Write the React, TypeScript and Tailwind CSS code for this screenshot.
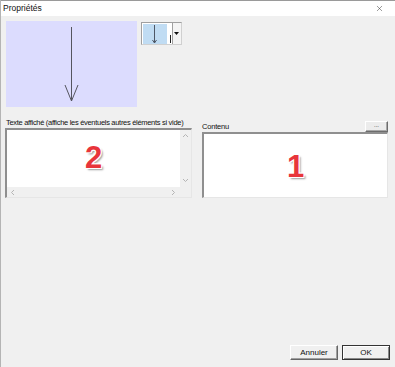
import { X } from "lucide-react";

const Chevron = ({ dir }: { dir: "up" | "down" | "left" | "right" }) => {
  const d = {
    up: "M1 4 L3.5 1.5 L6 4",
    down: "M1 2 L3.5 4.5 L6 2",
    left: "M4 1 L1.5 3.5 L4 6",
    right: "M2 1 L4.5 3.5 L2 6",
  }[dir];
  return (
    <svg width="7" height="7" viewBox="0 0 7 7" className="block">
      <path d={d} fill="none" stroke="#b5b5b5" strokeWidth="1" />
    </svg>
  );
};

const BigNumber = ({ value }: { value: string }) => (
  <span className="font-['Liberation_Sans',sans-serif] text-[31px] font-bold leading-none text-[#e8353b] [text-shadow:-1px_-1px_0_#fff,1px_-1px_0_#fff,-1px_1px_0_#fff,1px_1px_0_#fff,2px_2px_2px_#9a9a9a]">
    {value}
  </span>
);

const DialogButton = ({ label, primary }: { label: string; primary?: boolean }) => (
  <button
    className={
      primary
        ? "h-[15px] w-[48px] border border-[#333] bg-[#f0f0f0] p-0 text-[8px] leading-none text-[#111] shadow-[inset_1px_1px_0_#fff,inset_-1px_-1px_0_#888]"
        : "h-[15px] w-[48px] border border-t-[#fff] border-l-[#fff] border-r-[#666] border-b-[#666] bg-[#f0f0f0] p-0 text-[8px] leading-none text-[#111] shadow-[inset_-1px_-1px_0_#a0a0a0]"
    }
  >
    {label}
  </button>
);

export default function App() {
  return (
    <div className="flex h-[367px] w-[395px] flex-col overflow-hidden border-l border-[#b4b4b4] bg-[#f0f0f0] font-['Liberation_Sans',sans-serif] text-[#111]">
      {/* title bar */}
      <div className="flex h-[16px] shrink-0 items-center justify-between border-t border-[#9a9a9a] bg-white pl-[2px] pr-[11px]">
        <span className="text-[8.5px] leading-none">Propriétés</span>
        <X size={9} strokeWidth={1.2} color="#222" />
      </div>

      {/* preview + combo */}
      <div className="flex items-start pl-[5px] pt-[5px]">
        <div className="h-[86px] w-[131px] bg-[#dcdcfe]">
          <svg width="131" height="86" viewBox="0 0 131 86">
            <g stroke="#55555f" strokeWidth="1" fill="none">
              <line x1="65.5" y1="6" x2="65.5" y2="80" />
              <line x1="59" y1="64" x2="65.5" y2="80" />
              <line x1="72" y1="64" x2="65.5" y2="80" />
            </g>
          </svg>
        </div>
        <div className="ml-[4px] mt-[1px] flex h-[23px] w-[41px] border border-t-[#a0a0a0] border-l-[#a0a0a0] border-r-[#d0d0d0] border-b-[#d0d0d0] bg-white">
          <div className="ml-px mt-px h-[20px] w-[24px] bg-[#c0dcf3]">
            <svg width="24" height="20" viewBox="0 0 24 20">
              <g stroke="#4d5766" strokeWidth="1" fill="none">
                <line x1="11.5" y1="1" x2="11.5" y2="19" />
                <line x1="9.5" y1="16" x2="11.5" y2="19" />
                <line x1="13.5" y1="16" x2="11.5" y2="19" />
              </g>
            </svg>
          </div>
          <div className="relative w-[5px]">
            <div className="absolute left-[3px] top-[12px] h-[8px] w-px bg-[#222]" />
          </div>
          <div className="flex w-[10px] items-center justify-center border-l border-[#a0a0a0] bg-[#f4f4f4]">
            <svg width="5" height="3" viewBox="0 0 5 3">
              <path d="M0 0 L5 0 L2.5 3 Z" fill="#111" />
            </svg>
          </div>
        </div>
      </div>

      {/* text fields */}
      <div className="mt-[11px] flex pl-[4px]">
        <div className="flex w-[187px] flex-col">
          <div className="h-[10px] pl-px text-[7.5px] leading-[10px] tracking-[-0.3px] whitespace-nowrap">
            Texte affiché (affiche les éventuels autres éléments si vide)
          </div>
          <div className="flex h-[70px] flex-col border-l-2 border-t-2 border-r border-b border-l-[#8f8f8f] border-t-[#8f8f8f] border-r-[#e6e6e6] border-b-[#e6e6e6] bg-white">
            <div className="flex flex-1">
              <div className="flex flex-1 items-center justify-center pb-[2px]">
                <BigNumber value="2" />
              </div>
              <div className="flex w-[11px] flex-col items-center justify-between bg-[#f0f0f0] py-[3px]">
                <Chevron dir="up" />
                <Chevron dir="down" />
              </div>
            </div>
            <div className="flex h-[10px]">
              <div className="flex flex-1 items-center justify-between bg-[#f0f0f0] px-[3px]">
                <Chevron dir="left" />
                <Chevron dir="right" />
              </div>
              <div className="w-[11px] bg-[#f0f0f0]" />
            </div>
          </div>
        </div>

        <div className="ml-[10px] mt-[3px] flex w-[186px] flex-col">
          <div className="flex h-[11px] items-center justify-between">
            <span className="text-[7.5px] leading-none tracking-[-0.2px]">Contenu</span>
            <div className="flex h-[11px] w-[23px] items-end justify-center border border-t-[#fff] border-l-[#fff] border-r-[#6d6d6d] border-b-[#6d6d6d] bg-[#ececec] pb-[3px] shadow-[inset_-1px_-1px_0_#a8a8a8]">
              <span className="text-[6px] leading-none">...</span>
            </div>
          </div>
          <div className="flex h-[66px] items-center justify-center border-l-2 border-t-2 border-r border-b border-l-[#8f8f8f] border-t-[#8f8f8f] border-r-[#e6e6e6] border-b-[#e6e6e6] bg-white pt-[2px]">
            <BigNumber value="1" />
          </div>
        </div>
      </div>

      <div className="flex-1" />

      {/* dialog buttons */}
      <div className="flex justify-end gap-[4px] pb-[7px] pr-[5px]">
        <DialogButton label="Annuler" />
        <DialogButton label="OK" primary />
      </div>
    </div>
  );
}
